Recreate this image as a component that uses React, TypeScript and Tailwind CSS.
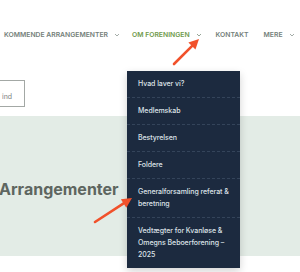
import React from 'react'

const menu = [
  ['Hvad laver vi?'],
  ['Medlemskab'],
  ['Bestyrelsen'],
  ['Foldere'],
  ['Generalforsamling referat &', 'beretning'],
  ['Vedtægter for Kvanløse &', 'Omegns Beboerforening –', '2025'],
]

function Chevron({ color }: { color: string }) {
  return (
    <svg width="6" height="4" viewBox="0 0 6 4" className="ml-[6px] shrink-0">
      <path d="M1 1l2 2 2-2" fill="none" stroke={color} strokeWidth="0.9" />
    </svg>
  )
}

function Arrow({ x1, y1, x2, y2 }: { x1: number; y1: number; x2: number; y2: number }) {
  const dx = x2 - x1
  const dy = y2 - y1
  const len = Math.hypot(dx, dy)
  const ux = dx / len
  const uy = dy / len
  const hl = 10
  const hw = 5
  const bx = x2 - ux * hl
  const by = y2 - uy * hl
  const pts = `${x2},${y2} ${bx - uy * hw},${by + ux * hw} ${bx + uy * hw},${by - ux * hw}`
  return (
    <g>
      <line x1={x1} y1={y1} x2={bx} y2={by} stroke="#f1512b" strokeWidth="2.6" strokeLinecap="round" />
      <polygon points={pts} fill="#f1512b" />
    </g>
  )
}

export default function App() {
  return (
    <div className="relative w-[300px] h-[272px] overflow-hidden bg-white font-['Inter',sans-serif]">
      <header className="h-[116px] pt-[30px]">
        <nav className="flex items-center whitespace-nowrap pl-[4px] text-[6.8px] font-semibold uppercase leading-[9px] text-[#74807a]">
          <span className="flex items-center shrink-0">Kommende arrangementer<Chevron color="#9aa39e" /></span>
          <span className="ml-[12px] flex items-center shrink-0 text-[#6f9a4c]">Om foreningen<Chevron color="#8a9a8a" /></span>
          <span className="ml-[14px] shrink-0">Kontakt</span>
          <span className="ml-[15px] flex items-center shrink-0">Mere<Chevron color="#9aa39e" /></span>
        </nav>
        <div className="mt-[41px] ml-[-10px] w-[35px] h-[27px] border border-[#a3a8a5] flex items-end pb-[5px] pl-[11px]">
          <span className="text-[7px] text-[#7d817f] leading-[8px]">ind</span>
        </div>
      </header>
      <section className="h-[140px] bg-[#e3ece6] pt-[63px]">
        <h2 className="text-[16px] font-bold leading-[20px] text-[#5e6660] ml-[-1px]">Arrangementer</h2>
      </section>

      <div className="absolute left-[127px] top-[71px] w-[113px] bg-[#1c2a3f] shadow-[0_3px_8px_rgba(0,0,0,0.18)]">
        {menu.map((lines, i) => (
          <div
            key={i}
            className={`px-[11px] py-[7px] text-[7px] leading-[12px] font-medium tracking-[-0.05px] text-[#dde2e8] ${i < menu.length - 1 ? 'border-b border-dashed border-[#34445a]' : ''}`}
          >
            {lines.map((l, j) => (
              <div key={j} className="whitespace-nowrap">{l}</div>
            ))}
          </div>
        ))}
      </div>

      <svg className="absolute left-0 top-0 pointer-events-none" width="300" height="272">
        <Arrow x1={174} y1={64} x2={199} y2={39} />
        <Arrow x1={95} y1={222} x2={132} y2={198} />
      </svg>
    </div>
  )
}
